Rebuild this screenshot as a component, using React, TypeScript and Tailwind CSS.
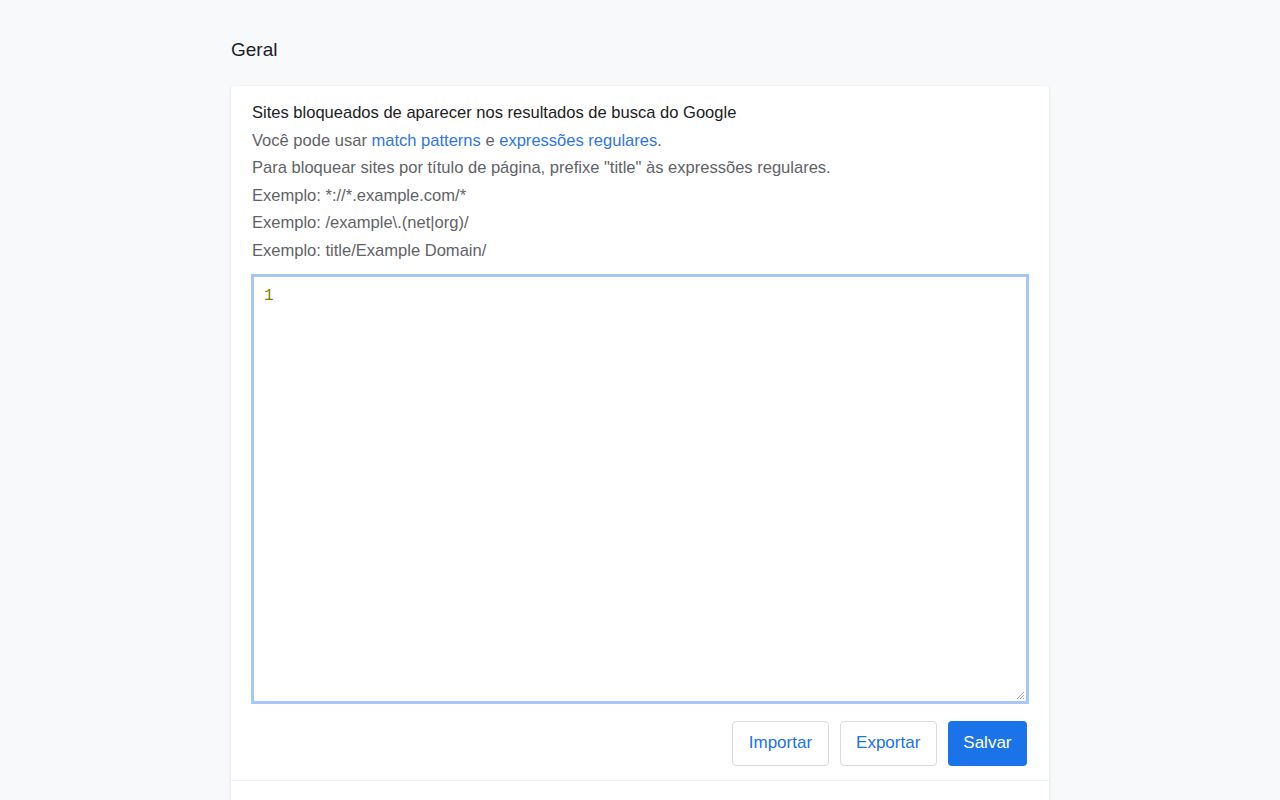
import React from 'react';

const App = () => {
    return (
        <div className="min-h-screen bg-[#f8f9fa] font-['Liberation_Sans',Arial,sans-serif]">
            <div className="w-[818px] mx-auto pt-[37px]">
                <h1 className="text-[19px] leading-[26px] text-[#202124] mb-[23px]">Geral</h1>
                <section className="bg-white rounded-[4px] shadow-[0_1px_3px_rgba(60,64,67,0.18)] pb-[40px]">
                    <div className="px-[20px] pt-[12px] pb-[14px] border-b border-[#eceef0]">
                        <div className="text-[16.55px] leading-[27.6px] text-[#5f6368] pt-[1px] pl-[1px]">
                            <p className="text-[#202124]">Sites bloqueados de aparecer nos resultados de busca do Google</p>
                            <p>
                                Você pode usar <a className="text-[#2f76e6]" href="#">match patterns</a> e{' '}
                                <a className="text-[#2f76e6]" href="#">expressões regulares</a>.
                            </p>
                            <p>Para bloquear sites por título de página, prefixe "title" às expressões regulares.</p>
                            <p>Exemplo: *://*.example.com/*</p>
                            <p>Exemplo: /example\.(net|org)/</p>
                            <p>Exemplo: title/Example Domain/</p>
                        </div>
                        <div className="mt-[9px] h-[430px] border-[3px] border-[#a8c7f7] bg-white flex relative">
                            <div className="pl-[10px] pt-[8px] font-['Liberation_Mono',monospace] text-[16px] leading-[22px] text-[#7f7f00]">1</div>
                            <svg className="absolute right-[1px] bottom-[1px]" width="9" height="9" viewBox="0 0 9 9">
                                <path d="M8 1L1 8M8 4L4 8M8 7L7 8" stroke="#9aa0a6" strokeWidth="1" />
                            </svg>
                        </div>
                        <div className="flex justify-end gap-[11px] mt-[17px] pr-[2px]">
                            <button className="h-[45px] px-[15.5px] rounded-[4px] border border-[#dadce0] bg-white text-[17px] text-[#1a73e8]">Importar</button>
                            <button className="h-[45px] px-[15.5px] rounded-[4px] border border-[#dadce0] bg-white text-[17px] text-[#1a73e8]">Exportar</button>
                            <button className="h-[45px] px-[15.5px] rounded-[4px] bg-[#1a73e8] text-[17px] text-white">Salvar</button>
                        </div>
                    </div>
                </section>
            </div>
        </div>
    );
};

export default App;
